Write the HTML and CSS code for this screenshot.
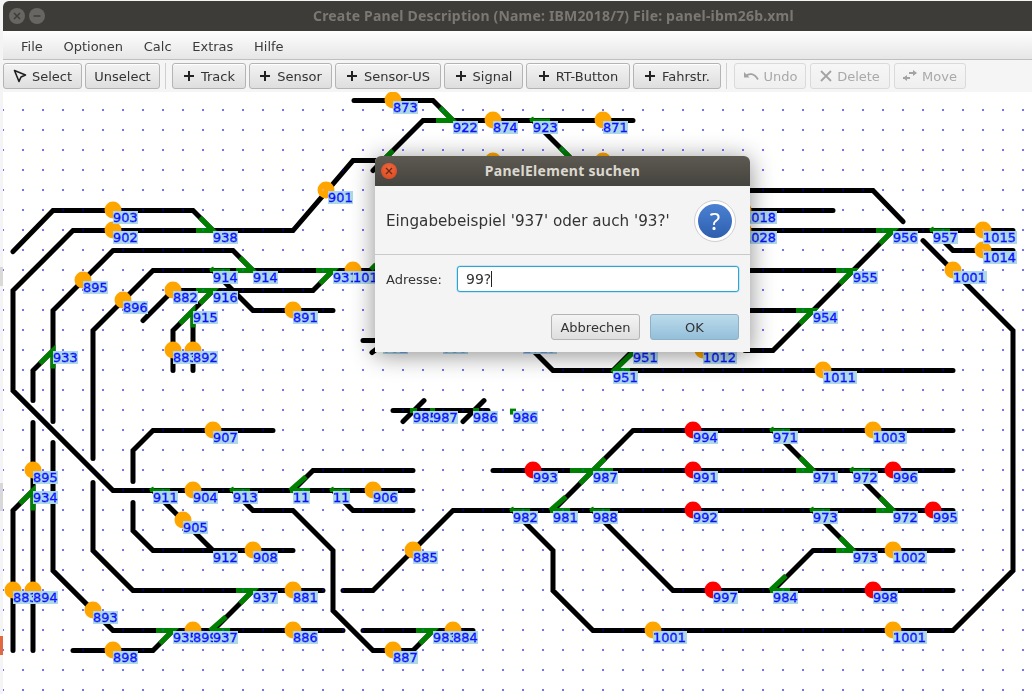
FILE: index.html
```html
<!DOCTYPE html>
<html lang="de">
<head>
<meta charset="utf-8">
<title>Create Panel Description</title>
<link rel="stylesheet" href="styles.css">
</head>
<body>
<div class="desk-a"></div><div class="desk-b"></div><div class="desk-c"></div>
<div class="win">
  <div class="titlebar">
    <span class="wbtn"><svg width="10" height="10" viewBox="0 0 10 10"><path d="M2 2L8 8M8 2L2 8" class="wglyph"/></svg></span>
    <span class="wbtn"><svg width="10" height="10" viewBox="0 0 10 10"><path d="M1.5 5H8.5" class="wglyph"/></svg></span>
    <span class="wtitle">Create Panel Description (Name: IBM2018/7) File: panel-ibm26b.xml</span>
  </div>
  <nav class="menubar"><span>File</span><span>Optionen</span><span>Calc</span><span>Extras</span><span>Hilfe</span></nav>
  <div class="toolbar">
    <button class="btn w-select"><svg width="14" height="14" viewBox="0 0 14 14"><path d="M1.5 1.5L12.5 6L8 8L6 12.5Z" class="ico-line"/></svg>Select</button>
    <button class="btn w-unselect">Unselect</button>
    <i class="sep"></i>
    <button class="btn add w-track"><svg width="12" height="12" viewBox="0 0 12 12"><path d="M6 1V11M1 6H11" class="ico-plus"/></svg>Track</button>
    <button class="btn add w-sensor"><svg width="12" height="12" viewBox="0 0 12 12"><path d="M6 1V11M1 6H11" class="ico-plus"/></svg>Sensor</button>
    <button class="btn add w-us"><svg width="12" height="12" viewBox="0 0 12 12"><path d="M6 1V11M1 6H11" class="ico-plus"/></svg>Sensor-US</button>
    <button class="btn add w-signal"><svg width="12" height="12" viewBox="0 0 12 12"><path d="M6 1V11M1 6H11" class="ico-plus"/></svg>Signal</button>
    <button class="btn add w-rt"><svg width="12" height="12" viewBox="0 0 12 12"><path d="M6 1V11M1 6H11" class="ico-plus"/></svg>RT-Button</button>
    <button class="btn add w-fahr"><svg width="12" height="12" viewBox="0 0 12 12"><path d="M6 1V11M1 6H11" class="ico-plus"/></svg>Fahrstr.</button>
    <i class="sep"></i>
    <button class="btn off w-undo"><svg width="16" height="12" viewBox="0 0 16 12"><path d="M1 2V7.5H6.5Z" class="ico-fill"/><path d="M3 6C6 3 11 3 15 9.5" class="ico-off"/></svg>Undo</button>
    <button class="btn off w-delete"><svg width="12" height="12" viewBox="0 0 12 12"><path d="M1 1L11 11M11 1L1 11" class="ico-off"/></svg>Delete</button>
    <button class="btn off w-move"><svg width="14" height="12" viewBox="0 0 14 12"><path d="M6 3H11M0 8H7" class="ico-off"/><path d="M10 0L14 3L10 6ZM4 5L0 8L4 11Z" class="ico-fill"/></svg>Move</button>
  </div>
  <div class="canvas">
    <svg class="panel" width="1029" height="602" viewBox="3 92 1029 602">
      <defs>
        <pattern id="dots" x="23" y="110" width="20" height="20" patternUnits="userSpaceOnUse"><rect x="-1" y="-1" width="2" height="2" class="dot"/><rect x="19" y="-1" width="2" height="2" class="dot"/><rect x="-1" y="19" width="2" height="2" class="dot"/><rect x="19" y="19" width="2" height="2" class="dot"/></pattern>
        <pattern id="dotsdark" x="23" y="110" width="20" height="20" patternUnits="userSpaceOnUse"><rect x="-1" y="-1" width="2" height="2" class="dotdark"/><rect x="19" y="-1" width="2" height="2" class="dotdark"/><rect x="-1" y="19" width="2" height="2" class="dotdark"/><rect x="19" y="19" width="2" height="2" class="dotdark"/></pattern>
        <filter id="lblbg" x="0" y="0.07" width="1" height="0.84"><feFlood flood-color="#add8e6"/><feMerge><feMergeNode/><feMergeNode in="SourceGraphic"/></feMerge></filter>
      </defs>
      <rect x="3" y="92" width="1029" height="602" fill="url(#dots)"/>
      <g class="layer">
      <path class="track" d="M354 100H433L453 120M373 170L423 120H633M533 120L573 160M13 251L53 210H193L213 230M413 490H113L13 390V290L73 230H293L353 160H380M113 250H233L253 270M113 250L53 310V421M53 442V570L113 630H343M380 270H153L93 330V458M93 482V550L133 590H323M143 320L173 290H313L333 270M213 290L173 330V370M193 310V370M213 270L253 310H333M33 370L53 350M33 370V400M33 422V650M13 510L33 490M13 510V650M363 340H380M372 352L380 346M393 410H488M403 421L424 400M463 421L484 400M133 481V450L153 430H273M133 502V530L153 550H293M153 490L213 550M233 490L253 510H293L333 550V610L373 650H413L433 630M363 630H473M293 490L313 470H413M333 490L353 510H413M253 590L213 630M173 630L153 650H73M343 590H373L453 510H953M513 510L553 550V590L593 630H953L1013 570V330L923 240M745 190H873L903 221M745 210H833M745 230H1013M745 270H853M745 310H813M745 350H773L893 230M933 230L953 250H1013M533 350L553 370H953M633 350L613 370M633 430H953M553 510L633 430M493 470H953M773 430L813 470M853 470L893 510M813 510L853 550M813 550H953M773 590L813 550M593 510L673 590H953"/>
      <path class="switch" d="M440 107L453 120H436M200 217L213 230H196M240 257L253 270H236M796 310H813L800 323M836 270H853L840 283M876 230H893L880 243M316 270H333L320 283M196 290H213L200 303M156 630H173L160 643M416 630H433L420 643M236 590H253L240 603M33 510V490L20 503M53 368V350L40 363M193 327V310L180 323M290 490H310M290 490L306 476M550 510H570M550 510L566 496M210 630H230M210 630L226 616M770 590H790M770 590L786 575M570 470H613M580 483L605 458M800 457L813 470H796M880 497L893 510H876M840 537L853 550H836M393 150L376 167M560 147L573 160M612 372L633 352M613 370H630M410 410H417M430 410H435M473 410H479M371 269L376 264"/>
      <path class="switch-thin" d="M530 119.6H550M534 117.5L530 120M210 269.6H230M214 267.5L210 270M150 489.6H170M154 487.5L150 490M230 489.6H250M234 487.5L230 490M330 489.6H350M334 487.5L330 490M930 229.6H950M934 227.5L930 230M770 429.6H790M774 427.5L770 430M850 469.6H870M854 467.5L850 470M810 509.6H830M814 507.5L810 510M510 509.6H530M514 507.5L510 510M590 509.6H610M594 507.5L590 510"/>
      <path class="tip" d="M510 411H516"/>
      </g>
      <g class="node">
      <circle cx="393" cy="100" r="8.5"/><circle cx="493" cy="120" r="8.5"/><circle cx="603" cy="120" r="8.5"/><circle cx="493" cy="161" r="8.5"/><circle cx="603" cy="161" r="8.5"/><circle cx="326" cy="190" r="8.5"/><circle cx="113" cy="210" r="8.5"/><circle cx="113" cy="230" r="8.5"/><circle cx="83" cy="280" r="8.5"/><circle cx="123" cy="300" r="8.5"/><circle cx="173" cy="290" r="8.5"/><circle cx="293" cy="310" r="8.5"/><circle cx="353" cy="270" r="8.5"/><circle cx="173" cy="350" r="8.5"/><circle cx="193" cy="350" r="8.5"/><circle cx="33" cy="470" r="8.5"/><circle cx="13" cy="590" r="8.5"/><circle cx="33" cy="590" r="8.5"/><circle cx="93" cy="610" r="8.5"/><circle cx="193" cy="490" r="8.5"/><circle cx="373" cy="490" r="8.5"/><circle cx="183" cy="520" r="8.5"/><circle cx="253" cy="550" r="8.5"/><circle cx="213" cy="430" r="8.5"/><circle cx="293" cy="590" r="8.5"/><circle cx="293" cy="630" r="8.5"/><circle cx="193" cy="630" r="8.5"/><circle cx="113" cy="650" r="8.5"/><circle cx="393" cy="650" r="8.5"/><circle cx="453" cy="630" r="8.5"/><circle cx="413" cy="550" r="8.5"/><circle cx="653" cy="630" r="8.5"/><circle cx="893" cy="630" r="8.5"/><circle cx="873" cy="430" r="8.5"/><circle cx="893" cy="550" r="8.5"/><circle cx="703" cy="350" r="8.5"/><circle cx="823" cy="370" r="8.5"/><circle cx="953" cy="270" r="8.5"/><circle cx="983" cy="230" r="8.5"/><circle cx="983" cy="250" r="8.5"/><circle cx="743" cy="210" r="8.5"/><circle cx="743" cy="230" r="8.5"/>
      </g>
      <g class="node red">
      <circle cx="533" cy="470" r="8.5"/><circle cx="693" cy="430" r="8.5"/><circle cx="693" cy="470" r="8.5"/><circle cx="693" cy="510" r="8.5"/><circle cx="893" cy="470" r="8.5"/><circle cx="933" cy="510" r="8.5"/><circle cx="713" cy="590" r="8.5"/><circle cx="873" cy="590" r="8.5"/>
      </g>
      <rect x="3" y="92" width="1029" height="602" fill="url(#dotsdark)" class="darken"/>
      <g class="lbl">
      <text x="393" y="113">873</text><text x="453" y="133">922</text><text x="493" y="133">874</text><text x="533" y="133">923</text><text x="603" y="133">871</text><text x="328" y="203">901</text><text x="113" y="223">903</text><text x="113" y="243">902</text><text x="213" y="243">938</text><text x="213" y="283">914</text><text x="253" y="283">914</text><text x="333" y="283">931</text><text x="353" y="283">1019</text><text x="83" y="293">895</text><text x="123" y="313">896</text><text x="173" y="303">882</text><text x="213" y="303">916</text><text x="193" y="323">915</text><text x="293" y="323">891</text><text x="173" y="363">883</text><text x="193" y="363">892</text><text x="53" y="363">933</text>
      <text x="383" y="353">952</text><text x="443" y="353">953</text><text x="523" y="353">1013</text>
      <text x="213" y="443">907</text><text x="33" y="483">895</text><text x="33" y="503">934</text><text x="153" y="503">911</text><text x="193" y="503">904</text><text x="233" y="503">913</text><text x="293" y="503">11</text><text x="333" y="503">11</text><text x="373" y="503">906</text><text x="183" y="533">905</text><text x="213" y="563">912</text><text x="253" y="563">908</text><text x="413" y="563">885</text><text x="253" y="603">937</text><text x="293" y="603">881</text><text x="13" y="603">883</text><text x="33" y="603">894</text><text x="93" y="623">893</text><text x="173" y="643">935</text><text x="193" y="643">899</text><text x="213" y="643">937</text><text x="293" y="643">886</text><text x="433" y="643">983</text><text x="453" y="643">884</text><text x="113" y="663">898</text><text x="393" y="663">887</text>
      <text x="413" y="423">985</text><text x="433" y="423">987</text><text x="473" y="423">986</text><text x="513" y="423">986</text>
      <text x="533" y="483">993</text><text x="593" y="483">987</text><text x="693" y="443">994</text><text x="773" y="443">971</text><text x="873" y="443">1003</text><text x="693" y="483">991</text><text x="813" y="483">971</text><text x="853" y="483">972</text><text x="893" y="483">996</text><text x="513" y="523">982</text><text x="553" y="523">981</text><text x="593" y="523">988</text><text x="693" y="523">992</text><text x="813" y="523">973</text><text x="893" y="523">972</text><text x="933" y="523">995</text><text x="853" y="563">973</text><text x="893" y="563">1002</text><text x="713" y="603">997</text><text x="773" y="603">984</text><text x="873" y="603">998</text><text x="653" y="643">1001</text><text x="893" y="643">1001</text>
      <text x="743" y="223">1018</text><text x="743" y="243">1028</text><text x="893" y="243">956</text><text x="933" y="243">957</text><text x="983" y="243">1015</text><text x="983" y="263">1014</text><text x="853" y="283">955</text><text x="953" y="283">1001</text><text x="813" y="323">954</text><text x="633" y="363">951</text><text x="703" y="363">1012</text><text x="613" y="383">951</text><text x="823" y="383">1011</text>
      </g>
    </svg>
  </div>
</div>
<section class="dialog">
  <header class="dlg-title">
    <span class="dlg-close"><svg width="8" height="8" viewBox="0 0 8 8"><path d="M1 1L7 7M7 1L1 7" class="close-x"/></svg></span>
    <span class="dlg-name">PanelElement suchen</span>
  </header>
  <div class="dlg-head">
    <span class="dlg-msg">Eingabebeispiel '937' oder auch '93?'</span>
    <span class="dlg-q"><span>?</span></span>
  </div>
  <div class="dlg-form">
    <label class="dlg-label">Adresse:</label>
    <div class="dlg-input">99?<i class="caret"></i></div>
  </div>
  <div class="dlg-actions">
    <button class="dbtn">Abbrechen</button>
    <button class="dbtn ok">OK</button>
  </div>
</section>
</body>
</html>
```
FILE: styles.css
```css
* { box-sizing: border-box; }
html, body { margin: 0; height: 100%; overflow: hidden; background: #f4f4f4; font-family: "DejaVu Sans", sans-serif; color: #333; }
body { position: relative; width: 1032px; height: 694px; }
.desk-a, .desk-b, .desk-c { position: absolute; left: 0; width: 3px; }
.desk-a { top: 267px; height: 19px; background: #d9d9d6; }
.desk-b { top: 483px; height: 28px; background: #d8d8d8; }
.desk-c { top: 636px; height: 19px; background: #e2693f; }
.win { position: absolute; left: 3px; top: 1px; width: 1029px; height: 693px; display: flex; flex-direction: column; }
.titlebar { flex: 0 0 30px; background: #3e3c38; border-radius: 6px 0 0 0; display: flex; align-items: center; padding: 0 0 1px 6px; gap: 4px; }
.wbtn { width: 16px; height: 16px; border-radius: 50%; background: #686662; display: flex; align-items: center; justify-content: center; }
.wglyph { stroke: #3e3c38; stroke-width: 1.5; fill: none; }
.wtitle { margin-left: 264px; font: 700 14px "Noto Sans", sans-serif; letter-spacing: 0.18px; color: #7b7873; white-space: nowrap; }
.menubar { flex: 0 0 29px; background: linear-gradient(#fefefe, #e6e6e6); border-bottom: 1px solid #bfbfbf; display: flex; align-items: center; padding: 2px 0 0 18px; gap: 20.7px; font-size: 13px; color: #3a3a3a; }
.toolbar { flex: 0 0 32px; background: #f5f5f5; display: flex; align-items: flex-start; padding-top: 3px; gap: 3px; }
.btn { height: 26px; padding: 0; display: flex; align-items: center; justify-content: center; gap: 5px; border: 1px solid #b4b4b4; border-radius: 3px; background: linear-gradient(#f3f3f3, #dedede); font: 13px "DejaVu Sans", sans-serif; color: #333; box-shadow: inset 0 1px 0 #fff; }
.add { gap: 6px; }
.w-select { width: 79px; }
.w-unselect { width: 75px; }
.w-track { width: 74px; }
.w-sensor { width: 83px; }
.w-us { width: 106px; }
.w-signal { width: 79px; }
.w-rt { width: 104px; }
.w-fahr { width: 88px; }
.w-undo { width: 72px; }
.w-delete { width: 80px; }
.w-move { width: 72px; }
.off { margin-left: 1px; background: linear-gradient(#f6f6f6, #efefef); border-color: #dadada; color: #a9a9a9; box-shadow: none; }
.sep { width: 1px; height: 26px; background: #cfcfcf; margin: 0 3px 0 2px; }
.ico-line { fill: none; stroke: #1e1e1e; stroke-width: 1.6; stroke-linejoin: round; }
.ico-plus { stroke: #222; stroke-width: 2; fill: none; }
.ico-off { stroke: #a3a3a3; stroke-width: 1.8; fill: none; }
.ico-fill { fill: #a3a3a3; }
.canvas { flex: 1; background: #fff; overflow: hidden; min-height: 0; }
.panel { display: block; }
.dot { fill: #7474fb; }
.dotdark { fill: #000070; }
.darken { mix-blend-mode: lighten; }
.layer { transform: translateY(0.6px); }
.track { fill: none; stroke: #000; stroke-width: 5; stroke-linecap: round; stroke-linejoin: miter; }
.switch { fill: none; stroke: #008000; stroke-width: 5; stroke-linecap: butt; stroke-linejoin: miter; }
.switch-thin { fill: none; stroke: #008000; stroke-width: 3.6; stroke-linecap: butt; }
.tip { fill: none; stroke: #008000; stroke-width: 6; }
.node circle { fill: #ffa500; }
.node.red circle { fill: #ff0000; }
.lbl { transform: translateY(-0.8px); }
.lbl text { font: 13px "DejaVu Sans", sans-serif; fill: #0808ff; stroke: #0808ff; stroke-width: 0.8; filter: url(#lblbg); }
.dialog { position: absolute; left: 375px; top: 156px; width: 375px; height: 196px; background: #f4f4f4; border-radius: 6px 6px 0 0; box-shadow: 0 3px 24px rgba(0, 0, 0, 0.45); display: flex; flex-direction: column; }
.dlg-title { flex: 0 0 30px; border-radius: 6px 6px 0 0; background: linear-gradient(#5d5a52, #45433e); display: flex; align-items: center; justify-content: center; position: relative; padding-bottom: 2px; }
.dlg-close { position: absolute; left: 6px; top: 7px; width: 16px; height: 16px; border-radius: 50%; background: radial-gradient(circle at 50% 35%, #f0683c, #d5451f); display: flex; align-items: center; justify-content: center; }
.close-x { stroke: #6d2712; stroke-width: 1.3; fill: none; }
.dlg-name { font: 700 14px "Noto Sans", sans-serif; letter-spacing: 0.3px; color: #dbd8cf; }
.dlg-head { flex: 0 0 69px; border-bottom: 1px solid #c9c9c9; display: flex; align-items: center; justify-content: space-between; padding: 2px 14px 0 11px; font-size: 15.2px; color: #333; }
.dlg-q { width: 42px; height: 42px; border-radius: 50%; background: #fff; border: 1px solid #cfcfcf; display: flex; align-items: center; justify-content: center; }
.dlg-q span { width: 34px; height: 34px; border-radius: 50%; background: linear-gradient(#4b81d3, #2e5fae); color: #fff; font: 24px/34px "Noto Sans", sans-serif; text-align: center; }
.dlg-form { display: flex; align-items: center; padding: 11px 11px 0 11px; }
.dlg-label { width: 71px; font-size: 13px; color: #333; }
.dlg-input { width: 282px; height: 26px; background: #fff; border: 1.5px solid #2aa5d6; border-radius: 3px; padding-left: 8px; font-size: 14px; line-height: 23px; color: #333; box-shadow: 0 0 0 0.5px #9fd6ec; display: flex; align-items: center; }
.caret { width: 1px; height: 16px; background: #222; margin-left: 0; }
.dlg-actions { display: flex; justify-content: flex-end; gap: 10px; padding: 22px 11px 0 0; }
.dbtn { width: 89px; height: 26px; border: 1px solid #b4b4b4; border-radius: 3px; background: linear-gradient(#f4f4f4, #dedede); font: 13px "DejaVu Sans", sans-serif; color: #333; padding: 0; }
.dbtn.ok { background: linear-gradient(#bcdbec, #93bfd9); border-color: #8eb1c6; }
```
